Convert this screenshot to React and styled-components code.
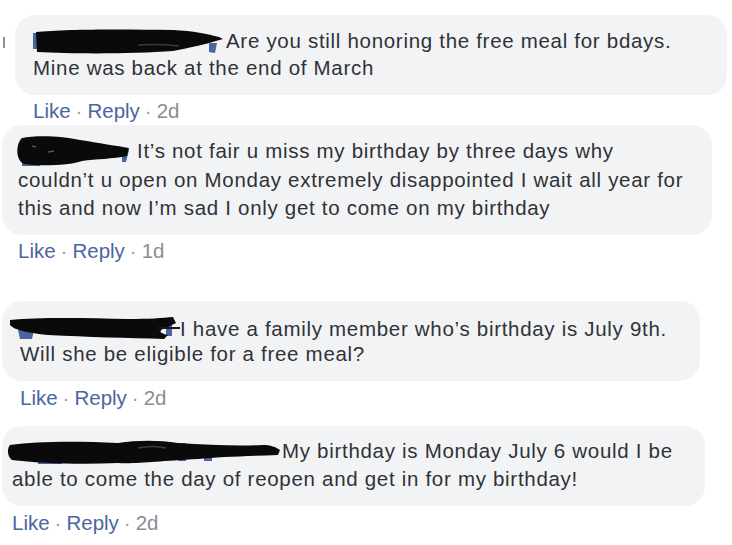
import React from 'react';
import styled, { createGlobalStyle } from 'styled-components';

const GlobalStyle = createGlobalStyle`
  html, body {
    margin: 0;
    padding: 0;
    background: #ffffff;
  }
  body {
    width: 732px;
    height: 545px;
    overflow: hidden;
    font-family: "Liberation Sans", Arial, sans-serif;
  }
`

const Thread = styled.div`
  display: flex;
  flex-direction: column;
  padding: 15px 0 0 2px;
`

const CommentBlock = styled.div`
  display: flex;
  flex-direction: column;
  margin-top: ${props => props.top}px;
`

const Row = styled.div`
  display: flex;
  align-items: flex-start;
`

const Mark = styled.div`
  width: 2px;
  height: 11px;
  margin: 22px 10px 0 1px;
  background: #8d9096;
`

const Bubble = styled.div`
  width: ${props => props.width}px;
  box-sizing: border-box;
  padding: ${props => props.pt}px 0 ${props => props.pb}px ${props => props.pl}px;
  background: #f2f3f5;
  border-radius: 20px;
`

const Body = styled.div`
  font-size: 20.5px;
  line-height: ${props => props.lh}px;
  letter-spacing: 0.7px;
  color: #303236;
  white-space: nowrap;
`

const Redaction = styled.svg`
  display: inline-block;
  vertical-align: ${props => props.drop}px;
  margin-left: ${props => props.shift || 0}px;
  overflow: visible;
`

const Actions = styled.div`
  margin-top: ${props => props.gap}px;
  padding-left: ${props => props.pl}px;
  font-size: 20.5px;
  line-height: 24px;
  color: #8a8d93;
  white-space: nowrap;
`

const ActionLink = styled.span`
  color: #4a66a0;
`

const Sep = styled.span`
  color: #9a9ca1;
  padding: 0 5px;
`

const blue = '#4a66a0';

const Blob1 = () => (
  <Redaction width="193" height="24" drop={-5} viewBox="0 0 193 24">
    <path d="M0 4 L4 4 L4 20 L0 20 Z" fill={blue} />
    <path d="M176 14 L184 14 L182 24 L176 23 Z" fill={blue} />
    <path d="M3 3 C30 0 90 0 140 1 C160 2 175 5 186 8 L190 10 L176 14 C160 18 150 20 140 22 C100 25 40 25 4 23 Z" fill="#0a0a0a" />
    <path d="M105 16 C120 15 135 16 146 17" stroke="#3b3b3b" strokeWidth="1.5" fill="none" />
  </Redaction>
)

const Blob2 = () => (
  <Redaction width="119" height="30" drop={-8} viewBox="0 0 119 30">
    <path d="M4 26 L22 27 L22 30 L4 30 Z" fill={blue} />
    <path d="M104 15 L111 14 L108 26 L104 26 Z" fill={blue} />
    <path d="M4 2 C18 -1 45 0 62 4 C80 7 100 10 111 12 L109 20 C95 23 78 23 64 25 C50 30 20 30 6 28 C-3 24 -2 7 4 2 Z" fill="#0a0a0a" />
    <path d="M14 10 L18 11 M30 16 L36 15" stroke="#555" strokeWidth="1.5" />
  </Redaction>
)

const Blob3 = () => (
  <Redaction width="172" height="22" drop={-3} shift={-12} viewBox="0 0 172 22">
    <path d="M10 13 L26 13 L24 22 L12 22 Z" fill={blue} />
    <path d="M158 4 L164 4 L164 19 L158 19 Z" fill={blue} />
    <path d="M2 3 C30 0 80 1 120 2 C140 2 155 1 165 0 L168 6 L160 10 C150 13 150 16 160 18 L156 22 C120 21 80 20 40 18 C20 16 6 13 2 8 Z" fill="#0a0a0a" />
    <path d="M150 11 L172 11" stroke="#1a1a1a" strokeWidth="2" />
  </Redaction>
)

const Blob4 = () => (
  <Redaction width="274" height="24" drop={-6} shift={-4} viewBox="0 0 274 24">
    <path d="M30 18 L54 18 L54 24 L30 24 Z" fill={blue} />
    <path d="M170 3 L178 3 L178 21 L170 21 Z M196 8 L204 8 L204 21 L196 21 Z" fill={blue} />
    <path d="M2 5 C30 1 70 1 110 3 C130 0 150 0 170 3 C200 5 230 6 255 5 C262 5 268 7 272 10 L270 15 C240 16 210 17 190 19 C150 21 130 24 110 23 C70 25 30 23 4 20 C-1 17 -1 8 2 5 Z" fill="#0a0a0a" />
    <path d="M130 8 C140 6 150 6 158 8" stroke="#3d3d3d" strokeWidth="1.5" fill="none" />
  </Redaction>
)

const comments = [
  {
    id: 1, top: 0, mark: true, width: 712, pl: 18, pt: 12, pb: 14, lh: 27, gap: 4,
    blob: Blob1, time: '2d',
    lines: ['Are you still honoring the free meal for bdays.', 'Mine was back at the end of March'],
  },
  {
    id: 2, top: 2, width: 710, pl: 16, pt: 11, pb: 13.5, lh: 27.5, gap: 4,
    blob: Blob2, time: '1d',
    lines: [
      'It\u2019s not fair u miss my birthday by three days why',
      'couldn\u2019t u open on Monday extremely disappointed I wait all year for',
      'this and now I\u2019m sad I only get to come on my birthday',
    ],
  },
  {
    id: 3, top: 38, width: 698, pl: 18, pt: 15, pb: 15, lh: 25, gap: 5,
    blob: Blob3, time: '2d',
    lines: ['I have a family member who\u2019s birthday is July 9th.', 'Will she be eligible for a free meal?'],
  },
  {
    id: 4, top: 16, width: 703, pl: 10, pt: 11, pb: 13, lh: 28, gap: 5,
    blob: Blob4, time: '2d',
    lines: ['My birthday is Monday July 6 would I be', 'able to come the day of reopen and get in for my birthday!'],
  },
];

const Comment = ({ c }) => {
  const Name = c.blob;
  return (
    <CommentBlock top={c.top}>
      <Row>
        {c.mark && <Mark />}
        <div>
          <Bubble width={c.width} pl={c.pl} pt={c.pt} pb={c.pb}>
            <Body lh={c.lh}>
              <Name />{c.lines[0]}
              {c.lines.slice(1).map((l, i) => (
                <React.Fragment key={i}><br />{l}</React.Fragment>
              ))}
            </Body>
          </Bubble>
          <Actions gap={c.gap} pl={c.pl}>
            <ActionLink>Like</ActionLink><Sep>·</Sep><ActionLink>Reply</ActionLink><Sep>·</Sep>{c.time}
          </Actions>
        </div>
      </Row>
    </CommentBlock>
  )
}

const App = () => (
  <>
    <GlobalStyle />
    <Thread>
      {comments.map(c => <Comment key={c.id} c={c} />)}
    </Thread>
  </>
)

export default App;
